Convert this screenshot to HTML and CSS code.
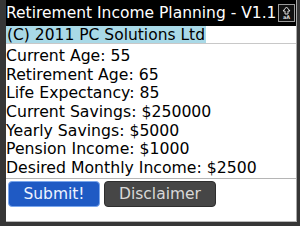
FILE: index.html
```html
<!DOCTYPE html>
<html>
<head>
<meta charset="utf-8">
<link rel="stylesheet" href="styles.css">
</head>
<body>
<div class="screen">
  <div class="panel">
    <div class="title">
      <span class="title-text">Retirement Income Planning - V1.1</span>
      <span class="shift">
        <svg width="17" height="18" viewBox="0 0 17 18">
          <rect x="0.5" y="0.5" width="16" height="17" fill="#111" stroke="#9a9a9a"/>
          <path d="M8.5 3 L5 7 H7 V10 H10 V7 H12 Z" fill="none" stroke="#ddd" stroke-width="1"/>
          <text x="8.5" y="15" font-size="5" font-family="DejaVu Sans" fill="#ddd" text-anchor="middle" font-weight="bold">aA</text>
        </svg>
      </span>
    </div>
    <div class="copy"><span class="hl">(C) 2011 PC Solutions Ltd</span></div>
    <div class="fields">
      <div class="row">Current Age: 55</div>
      <div class="row">Retirement Age: 65</div>
      <div class="row">Life Expectancy: 85</div>
      <div class="row">Current Savings: $250000</div>
      <div class="row">Yearly Savings: $5000</div>
      <div class="row">Pension Income: $1000</div>
      <div class="row">Desired Monthly Income: $2500</div>
    </div>
    <div class="buttons">
      <button class="btn btn-primary">Submit!</button>
      <button class="btn btn-dark">Disclaimer</button>
    </div>
  </div>
</div>
</body>
</html>
```
FILE: styles.css
```css
html, body {
  margin: 0;
  padding: 0;
  background: #353535;
}
.screen {
  width: 300px;
  height: 226px;
  padding-left: 6px;
  box-sizing: border-box;
  background: #363636;
  font-family: "DejaVu Sans", sans-serif;
  font-size: 15.5px;
}
.panel {
  width: 291px;
  height: 222px;
  box-sizing: border-box;
  background: #fff;
  border-right: 1px solid #a9a9a9;
  border-bottom: 1px solid #b8b8b8;
  display: flex;
  flex-direction: column;
}
.title {
  height: 26px;
  background: #000;
  color: #fff;
  display: flex;
  align-items: center;
  justify-content: space-between;
  padding-right: 1px;
  line-height: 26px;
}
.title-text {
  white-space: nowrap;
}
.shift {
  display: flex;
  margin-top: -1px;
}
.copy {
  height: 17px;
  line-height: 18px;
  border-bottom: 1px solid #c8c8c8;
  white-space: nowrap;
}
.hl {
  background: #a9d9e7;
  color: #000;
  display: inline-block;
  height: 17px;
  padding-left: 1px;
  padding-right: 1px;
}
.fields {
  padding-top: 3px;
  height: 131px;
  border-bottom: 1px solid #b5b5b5;
  font-size: 15.7px;
}
.row {
  line-height: 18.67px;
  height: 18.67px;
  white-space: nowrap;
  color: #000;
}
.buttons {
  display: flex;
  gap: 4px;
  padding-left: 2px;
  padding-top: 2px;
}
.btn {
  font-family: "DejaVu Sans", sans-serif;
  font-size: 15.5px;
  height: 26px;
  border-radius: 4px;
  padding: 0;
  margin: 0;
  line-height: 24px;
}
.btn-primary {
  width: 92px;
  background: #1f5ac4;
  border: 1px solid #7aa6ec;
  color: #eef3ff;
}
.btn-dark {
  width: 112px;
  background: #464646;
  border: 1px solid #2e2e2e;
  color: #d8d8d8;
}
```
